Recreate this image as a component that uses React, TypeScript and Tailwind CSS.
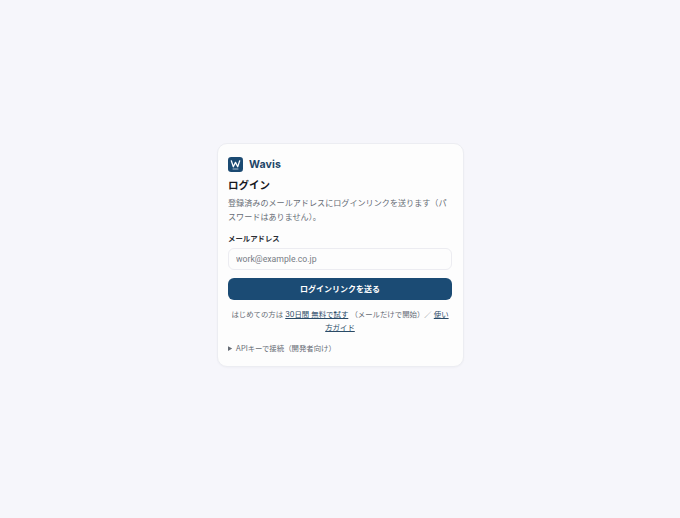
import React from "react";

export default function App() {
  return (
    <div className="flex min-h-screen items-center justify-center bg-[#f6f6fb] pb-2 font-['Inter','Noto_Sans_CJK_JP',sans-serif]">
      <main className="w-[247px] rounded-[10px] border border-[#ecedf2] bg-[#fdfdfd] px-[10.5px] pt-[11px] pb-[11px] shadow-[0_1px_2px_rgba(20,30,60,0.03)]">
        {/* Brand */}
        <div className="flex items-center gap-1.5">
          <svg width="15" height="15" viewBox="0 0 15 15" aria-hidden="true">
            <rect width="15" height="15" rx="3.2" fill="#1b4a72" />
            <path d="M3.3 3.8 L5.3 9.8 L7.5 5.4 L9.7 9.8 L11.7 3.8" fill="none" stroke="#ffffff" strokeWidth="1.25" strokeLinejoin="round" strokeLinecap="round" />
            <path d="M5 12 H10" stroke="#cfdbe6" strokeWidth="0.8" strokeLinecap="round" />
          </svg>
          <span className="text-[10.6px] leading-[18px] font-bold tracking-[0.1px] text-[#1d4568] translate-y-[0.5px]">Wavis</span>
        </div>

        <h1 className="mt-[3px] text-[10.5px] leading-[20px] font-bold text-[#16181d]">ログイン</h1>
        <p className="text-[8.1px] leading-[14px] text-[#666c75]">
          登録済みのメールアドレスにログインリンクを送ります（パスワードはありません）。
        </p>

        <form className="mt-[9px]" onSubmit={(e) => e.preventDefault()}>
          <label htmlFor="email" className="block text-[7.4px] leading-[12px] font-bold text-[#2a2e35]">
            メールアドレス
          </label>
          <input
            id="email"
            type="email"
            placeholder="work@example.co.jp"
            className="mt-[3px] block h-[22px] w-full rounded-md border border-[#ececf1] bg-[#fdfdfd] px-[7px] font-['Roboto',sans-serif] text-[8.7px] outline-none placeholder:text-[#777c85]"
          />
          <button
            type="submit"
            className="mt-[8px] block h-[22px] w-full rounded-md bg-[#1b4b74] text-[8px] font-bold text-white"
          >
            ログインリンクを送る
          </button>
        </form>

        <p className="mt-[7.5px] text-center text-[7.4px] leading-[13px] text-[#666c75]">
          はじめての方は{" "}
          <a href="#" className="text-[#2a4a66] underline">30日間 無料で試す</a>
          {" "}（メールだけで開始）／{" "}
          <a href="#" className="text-[#2a4a66] underline">使い方ガイド</a>
        </p>

        <details className="mt-[9.5px] text-[7.4px] leading-[12px] text-[#666c75]">
          <summary className="cursor-pointer">APIキーで接続（開発者向け）</summary>
        </details>
      </main>
    </div>
  );
}
